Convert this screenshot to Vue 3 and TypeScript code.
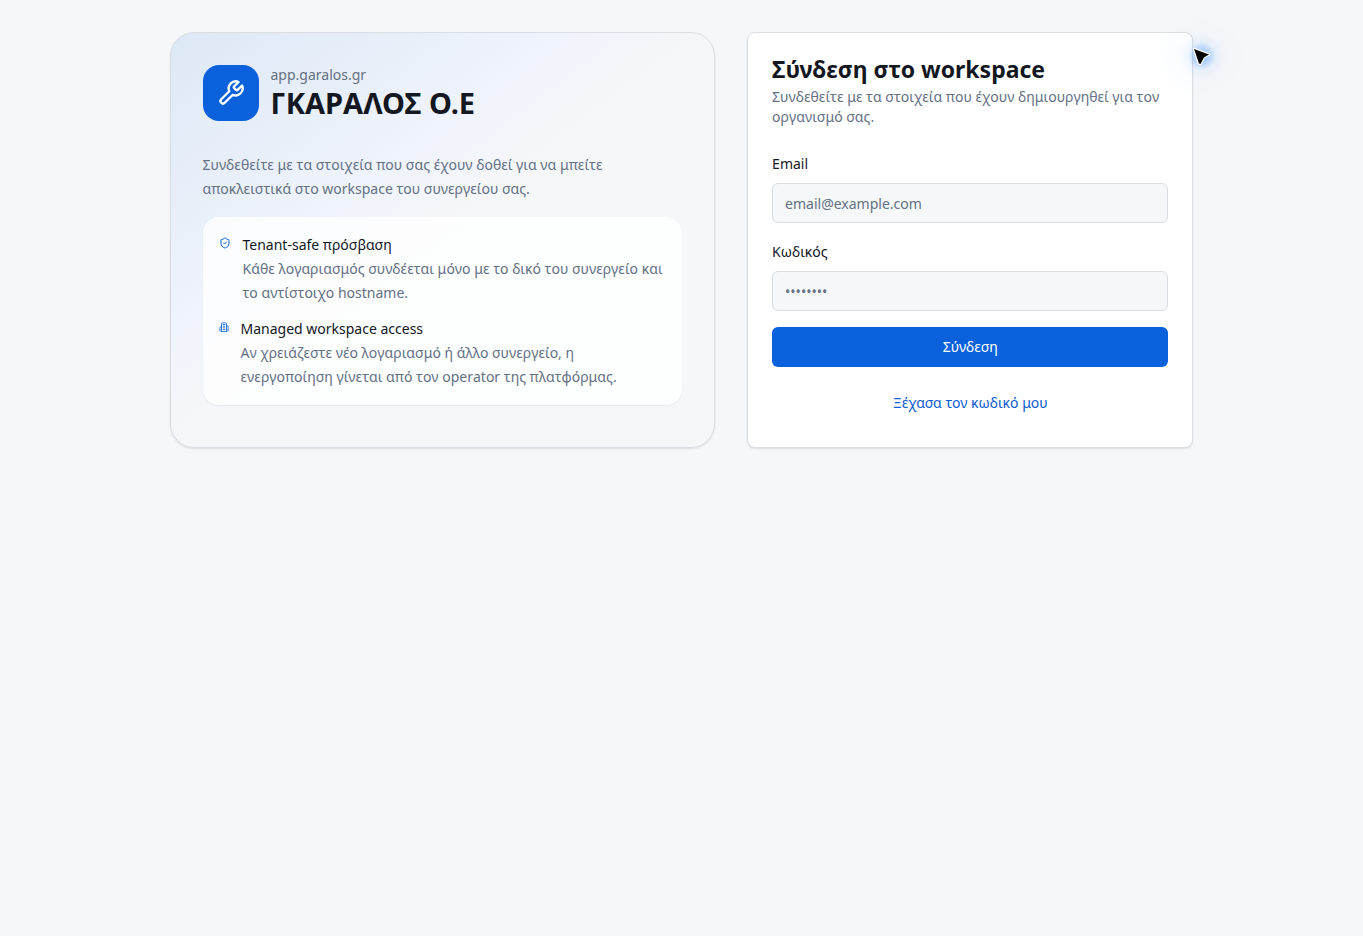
<script setup lang="ts">
import { ref } from 'vue'

const email = ref('')
const password = ref('')
</script>

<template>
  <main class="page">
    <div class="layout">
      <section class="intro">
        <header class="brand">
          <div class="brand-mark">
            <svg viewBox="0 0 24 24" width="28" height="28" class="icon" aria-hidden="true">
              <path d="M14.7 6.3a1 1 0 0 0 0 1.4l1.6 1.6a1 1 0 0 0 1.4 0l3.77-3.77a6 6 0 0 1-7.94 7.94l-6.91 6.91a2.12 2.12 0 0 1-3-3l6.91-6.91a6 6 0 0 1 7.94-7.94l-3.76 3.76z" />
            </svg>
          </div>
          <div>
            <p class="host">app.garalos.gr</p>
            <h1 class="brand-name">ΓΚΑΡΑΛΟΣ Ο.Ε</h1>
          </div>
        </header>
        <p class="lead">Συνδεθείτε με τα στοιχεία που σας έχουν δοθεί για να μπείτε αποκλειστικά στο workspace του συνεργείου σας.</p>
        <ul class="features">
          <li class="feature">
            <svg viewBox="0 0 24 24" class="icon feature-icon shield" aria-hidden="true">
              <path d="M20 13c0 5-3.5 7.5-7.66 8.95a1 1 0 0 1-.67-.01C7.5 20.5 4 18 4 13V6a1 1 0 0 1 1-1c2 0 4.5-1.2 6.24-2.72a1.17 1.17 0 0 1 1.52 0C14.51 3.81 17 5 19 5a1 1 0 0 1 1 1z" />
              <path d="m9 12 2 2 4-4" />
            </svg>
            <div>
              <p class="feature-title">Tenant-safe πρόσβαση</p>
              <p class="feature-text">Κάθε λογαριασμός συνδέεται μόνο με το δικό του συνεργείο και το αντίστοιχο hostname.</p>
            </div>
          </li>
          <li class="feature">
            <svg viewBox="0 0 24 24" class="icon feature-icon building" aria-hidden="true">
              <path d="M6 22V4a2 2 0 0 1 2-2h8a2 2 0 0 1 2 2v18Z" />
              <path d="M6 12H4a2 2 0 0 0-2 2v6a2 2 0 0 0 2 2h2" />
              <path d="M18 9h2a2 2 0 0 1 2 2v9a2 2 0 0 1-2 2h-2" />
              <path d="M10 6h4M10 10h4M10 14h4M10 18h4" />
            </svg>
            <div>
              <p class="feature-title">Managed workspace access</p>
              <p class="feature-text">Αν χρειάζεστε νέο λογαριασμό ή άλλο συνεργείο, η ενεργοποίηση γίνεται από τον operator της πλατφόρμας.</p>
            </div>
          </li>
        </ul>
      </section>

      <section class="login">
        <h2 class="login-title">Σύνδεση στο workspace</h2>
        <p class="login-text">Συνδεθείτε με τα στοιχεία που έχουν δημιουργηθεί για τον οργανισμό σας.</p>
        <form class="form" @submit.prevent>
          <div class="field">
            <label for="email">Email</label>
            <input id="email" v-model="email" type="email" placeholder="email@example.com" />
          </div>
          <div class="field">
            <label for="password">Κωδικός</label>
            <input id="password" v-model="password" type="password" placeholder="••••••••" />
          </div>
          <button type="submit" class="submit">Σύνδεση</button>
          <a href="#" class="forgot">Ξέχασα τον κωδικό μου</a>
        </form>
        <div class="pointer" aria-hidden="true">
          <svg viewBox="0 0 20 20" width="20" height="20">
            <path d="M2 3 17 8.5 12 11.5 8.5 18 7 17.5Z" fill="#000" stroke="#fff" stroke-width="2.5" stroke-linejoin="round" paint-order="stroke" />
          </svg>
        </div>
      </section>
    </div>
  </main>
</template>

<style>
body {
  margin: 0;
  background: #f6f7f9;
}
</style>

<style scoped>
.page {
  box-sizing: border-box;
  min-height: 100vh;
  padding: 32px 16px;
  overflow: hidden;
  background: #f6f7f9;
  color: #13171f;
  font-family: "Noto Sans", sans-serif;
  font-size: 14px;
  line-height: 24px;
}
.layout {
  display: grid;
  grid-template-columns: 11fr 9fr;
  gap: 32px;
  max-width: 1024px;
  margin: 0 auto;
}
h1, h2, p, ul {
  margin: 0;
  padding: 0;
}
.icon {
  fill: none;
  stroke: currentColor;
  stroke-width: 2;
  stroke-linecap: round;
  stroke-linejoin: round;
}
.intro {
  padding: 32px;
  border: 1px solid #dadde3;
  border-radius: 24px;
  background: linear-gradient(to bottom right, #dde8f6 0%, #eff3fb 35%, #f6f7f9 52%, #f6f7f9 100%);
  box-shadow: 0 1px 2px rgb(0 0 0 / 10%);
  color: #647084;
}
.brand {
  display: flex;
  align-items: center;
  gap: 12px;
}
.brand-mark {
  display: grid;
  place-items: center;
  width: 56px;
  height: 56px;
  border-radius: 16px;
  background: #0b61dc;
  color: #fff;
}
.host {
  line-height: 20px;
}
.brand-name {
  color: #13171f;
  font-size: 29px;
  font-weight: 700;
  line-height: 36px;
}
.lead,
.feature-text,
.login-text {
  font-kerning: none;
}
.lead {
  margin-top: 32px;
}
.features {
  display: grid;
  gap: 12px;
  margin-top: 16px;
  padding: 16px;
  border-radius: 16px;
  background: rgb(255 255 255 / 80%);
  box-shadow: 0 1px 2px rgb(0 0 0 / 6%);
  list-style: none;
}
.feature {
  display: flex;
  align-items: flex-start;
  gap: 12px;
}
.feature-icon {
  flex: none;
  height: 16px;
  margin-top: 2px;
  color: #0b61dc;
}
.shield {
  width: 12px;
}
.building {
  width: 10px;
}
.feature-title {
  color: #13171f;
}
.login {
  position: relative;
  padding: 24px;
  border: 1px solid #dadde3;
  border-radius: 8px;
  background: #fff;
  box-shadow: 0 1px 2px rgb(0 0 0 / 10%);
}
.login-title {
  font-size: 23px;
  font-weight: 700;
  line-height: 24px;
}
.login-text {
  margin-top: 6px;
  color: #647084;
  line-height: 20px;
}
.form {
  display: grid;
  gap: 16px;
  margin-top: 24px;
}
.field {
  display: grid;
  gap: 6px;
}
.field label {
  line-height: 26px;
}
input {
  box-sizing: border-box;
  width: 100%;
  height: 40px;
  padding: 8px 12px;
  border: 1px solid #dadde3;
  border-radius: 6px;
  background: #f5f7f9;
  color: #13171f;
  font: inherit;
}
input::placeholder {
  color: #647084;
  opacity: 1;
}
.submit {
  height: 40px;
  padding: 0 16px;
  border: 0;
  border-radius: 6px;
  background: #0b61dc;
  color: #fff;
  font: inherit;
}
.forgot {
  color: #0b5cd0;
  line-height: 40px;
  text-align: center;
  text-decoration: none;
}
.pointer {
  position: absolute;
  top: -25px;
  right: -58px;
  display: grid;
  place-items: center;
  width: 96px;
  height: 96px;
  border-radius: 50%;
  background: radial-gradient(circle, rgb(50 140 255 / 65%) 0, rgb(70 150 255 / 38%) 7px, rgb(90 160 255 / 10%) 14px, rgb(90 160 255 / 3%) 22px, transparent 44px);
  pointer-events: none;
}
</style>
